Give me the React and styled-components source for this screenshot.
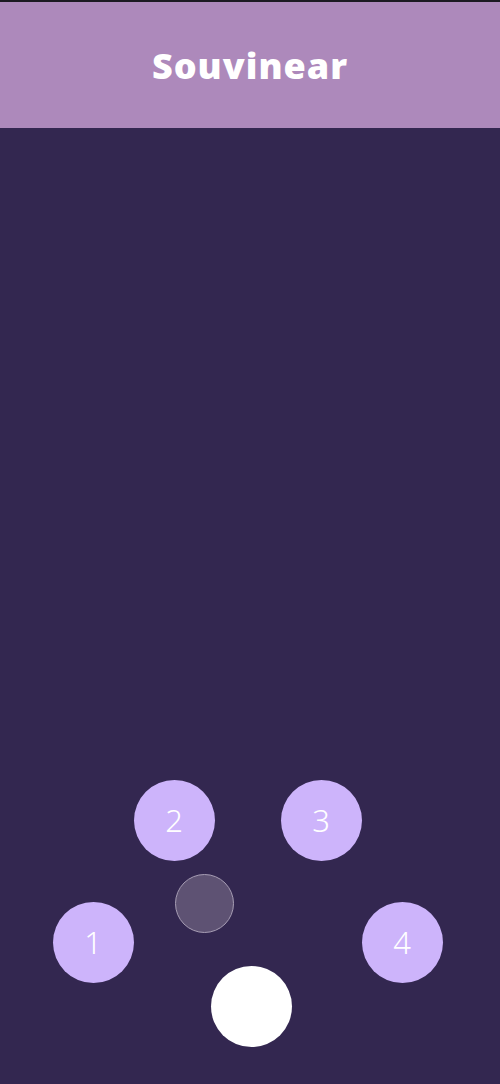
import React from 'react'
import styled, { createGlobalStyle } from 'styled-components'

const GlobalStyle = createGlobalStyle`
  html, body {
    margin: 0;
    padding: 0;
    background: #332750;
  }
  * { box-sizing: border-box; }
`

const Screen = styled.div`
  width: 500px;
  height: 1084px;
  display: flex;
  flex-direction: column;
  background: #332750;
  border-top: 2px solid #1c1a22;
  font-family: "Noto Sans", "Open Sans", sans-serif;
  overflow: hidden;
`

const Header = styled.header`
  height: 126px;
  flex: none;
  display: flex;
  align-items: center;
  justify-content: center;
  background: #ad89bb;
`

const Title = styled.h1`
  margin: 0;
  color: #ffffff;
  font-family: "Open Sans", sans-serif;
  font-weight: 800;
  font-size: 36px;
  letter-spacing: 1px;
`

const Main = styled.main`
  flex: 1;
  display: flex;
  flex-direction: column;
  justify-content: flex-end;
  padding-bottom: 37px;
`

const Dial = styled.div`
  position: relative;
  width: 100%;
  height: 267px;
`

const Bubble = styled.button`
  position: absolute;
  left: ${p => p.$x - p.$size / 2}px;
  top: ${p => p.$y - p.$size / 2}px;
  width: ${p => p.$size}px;
  height: ${p => p.$size}px;
  border-radius: 50%;
  border: none;
  padding: 0;
  display: flex;
  align-items: center;
  justify-content: center;
  background: #cdb4fb;
  color: #ffffff;
  font-family: "Noto Sans", sans-serif;
  font-weight: 300;
  font-size: 31px;
  line-height: 1;
`

const Knob = styled(Bubble)`
  background: #ffffff;
`

const Handle = styled(Bubble)`
  background: #5e5273;
  border: 1.5px solid #a79db4;
`

const options = [
  { n: 1, x: 93, y: 162 },
  { n: 2, x: 174, y: 40 },
  { n: 3, x: 321, y: 40 },
  { n: 4, x: 402, y: 162 },
]

const App = () => {
  return (
    <>
      <GlobalStyle />
      <Screen>
        <Header>
          <Title>Souvinear</Title>
        </Header>
        <Main>
          <Dial>
            {options.map(o => (
              <Bubble key={o.n} $x={o.x} $y={o.y} $size={81}>{o.n}</Bubble>
            ))}
            <Handle $x={204.5} $y={123} $size={59} />
            <Knob $x={251.5} $y={226} $size={81} />
          </Dial>
        </Main>
      </Screen>
    </>
  )
}

export default App
